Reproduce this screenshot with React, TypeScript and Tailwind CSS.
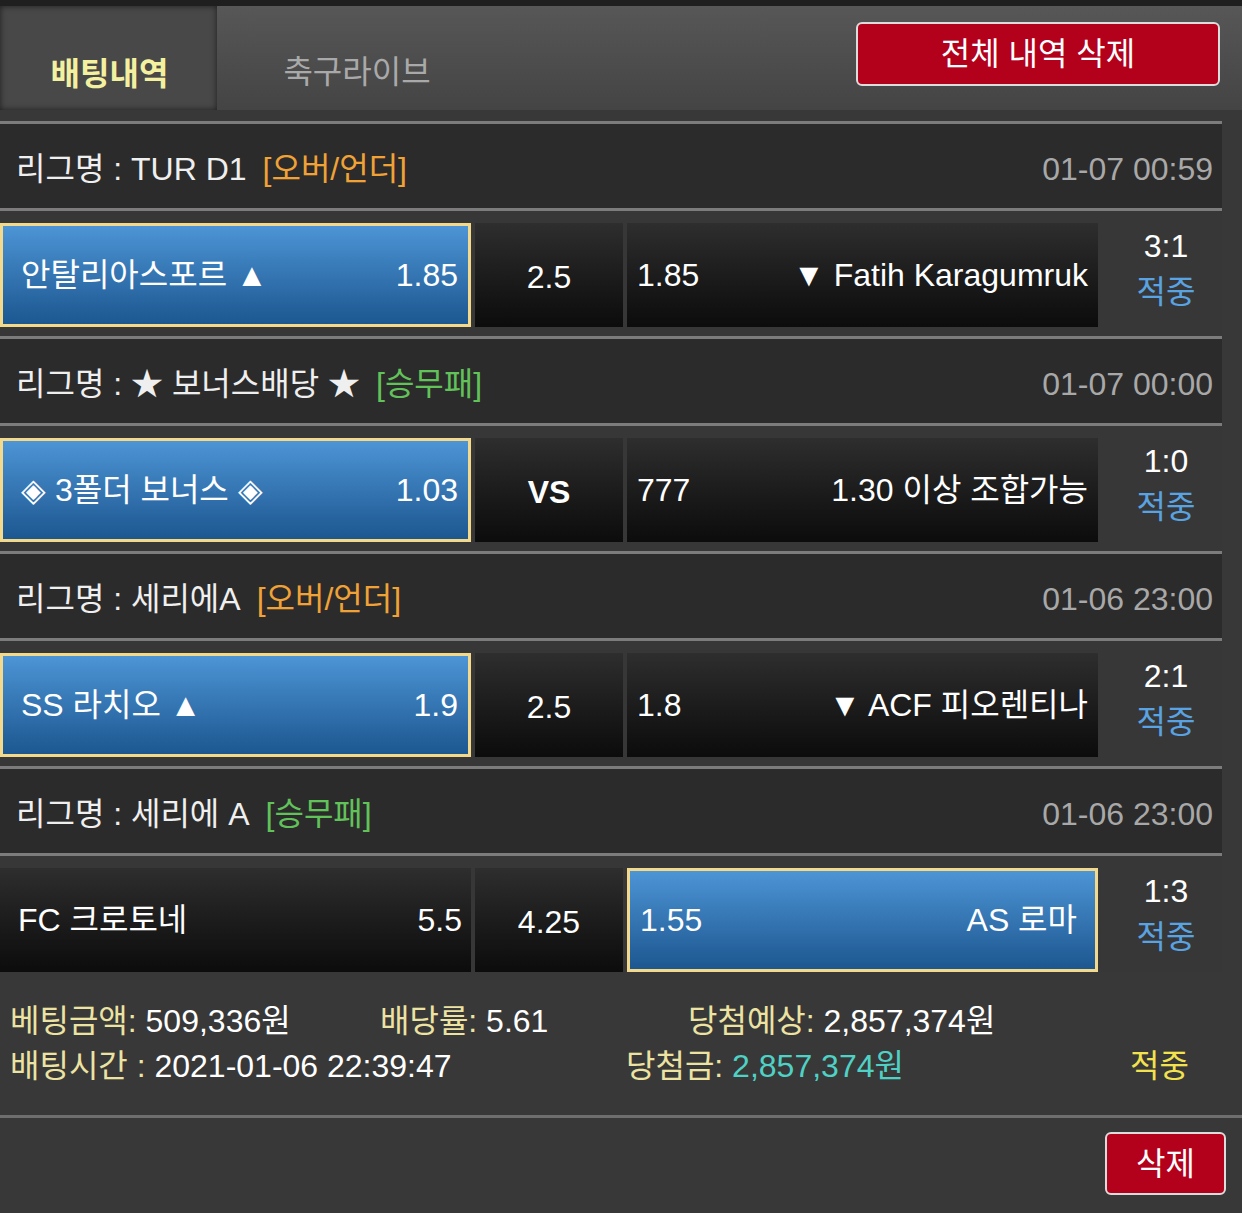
import React from 'react';

type Match = {
    league: string;
    market: string;
    marketKind: 'ou' | 'wdl';
    date: string;
    home: string;
    homeOdds: string;
    mid: string;
    midBold?: boolean;
    awayOdds: string;
    away: string;
    pick: 'home' | 'away';
    score: string;
};

const matches: Match[] = [
    { league: '리그명 : TUR D1', market: '[오버/언더]', marketKind: 'ou', date: '01-07 00:59', home: '안탈리아스포르 ▲', homeOdds: '1.85', mid: '2.5', awayOdds: '1.85', away: '▼ Fatih Karagumruk', pick: 'home', score: '3:1' },
    { league: '리그명 : ★ 보너스배당 ★', market: '[승무패]', marketKind: 'wdl', date: '01-07 00:00', home: '◈ 3폴더 보너스 ◈', homeOdds: '1.03', mid: 'VS', midBold: true, awayOdds: '777', away: '1.30 이상 조합가능', pick: 'home', score: '1:0' },
    { league: '리그명 : 세리에A', market: '[오버/언더]', marketKind: 'ou', date: '01-06 23:00', home: 'SS 라치오 ▲', homeOdds: '1.9', mid: '2.5', awayOdds: '1.8', away: '▼ ACF 피오렌티나', pick: 'home', score: '2:1' },
    { league: '리그명 : 세리에 A', market: '[승무패]', marketKind: 'wdl', date: '01-06 23:00', home: 'FC 크로토네', homeOdds: '5.5', mid: '4.25', awayOdds: '1.55', away: 'AS 로마', pick: 'away', score: '1:3' },
];

const blueCell = 'bg-gradient-to-b from-[#4d95d6] to-[#1c5790] border-[3px] border-[#f2d98c]';
const darkCell = 'bg-gradient-to-b from-[#2e2e2e] to-[#0c0c0c]';

function MatchBlock({ m, last }: { m: Match; last: boolean }) {
    return (
        <div>
            <div className="border-t-[3px] border-[#7c7c7c] h-[87px] bg-[#2b2b2b] flex items-center justify-between pl-[16px] pr-[9px] pt-[5px]">
                <div className="flex items-center gap-[16px] text-[32px] text-[#efefef]">
                    <span>{m.league}</span>
                    <span className={m.marketKind === 'ou' ? 'text-[#f0a236]' : 'text-[#62c25a]'}>{m.market}</span>
                </div>
                <span className="text-[32px] text-[#a8a8a8]">{m.date}</span>
            </div>
            <div className={`border-t-[3px] border-[#7c7c7c] bg-[#373737] flex pt-[12px] ${last ? 'pb-0' : 'pb-[9px]'}`}>
                <div className={`w-[471px] h-[104px] flex items-center justify-between text-[32px] text-white ${m.pick === 'home' ? `${blueCell} pl-[18px] pr-[10px]` : `${darkCell} pl-[18px] pr-[9px]`}`}>
                    <span>{m.home}</span>
                    <span>{m.homeOdds}</span>
                </div>
                <div className={`ml-[4px] w-[148px] h-[104px] flex items-center justify-center pt-[4px] text-[32px] text-white ${darkCell} ${m.midBold ? 'font-bold' : ''}`}>
                    {m.mid}
                </div>
                <div className={`ml-[4px] w-[471px] h-[104px] flex items-center justify-between text-[32px] text-white ${m.pick === 'away' ? `${blueCell} pl-[10px] pr-[18px]` : `${darkCell} pl-[10px] pr-[10px]`}`}>
                    <span>{m.awayOdds}</span>
                    <span>{m.away}</span>
                </div>
                <div className="flex-1 flex flex-col items-center justify-center leading-[46px] -mt-[12px] pl-[12px]">
                    <span className="text-[32px] text-white">{m.score}</span>
                    <span className="text-[32px] text-[#5aa3e2]">적중</span>
                </div>
            </div>
        </div>
    );
}

export default function App() {
    return (
        <div
            className="w-[1242px] min-h-[1213px] bg-[#383838] overflow-hidden"
            style={{ fontFamily: '"Liberation Sans", "Noto Sans CJK KR", sans-serif' }}
        >
            <div className="h-[6px] bg-[#1f1f1f]" />
            <div className="h-[104px] flex bg-gradient-to-b from-[#575757] to-[#444444]">
                <div className="w-[217px] h-full bg-[#484848] shadow-[inset_0_0_6px_rgba(0,0,0,0.6)] flex items-center justify-center pt-[26px] pl-[2px]">
                    <span className="text-[32px] font-bold text-[#f3f1a0]" style={{ fontFamily: '"Noto Sans CJK KR", sans-serif' }}>배팅내역</span>
                </div>
                <div className="w-[280px] h-full flex items-center justify-center pt-[28px]">
                    <span className="text-[32px] text-[#a9a9a9]">축구라이브</span>
                </div>
                <div className="flex-1 flex justify-end items-start pt-[16px] pr-[22px]">
                    <button className="w-[364px] h-[64px] rounded-[6px] border-2 border-[#dcdcdc] bg-[#b3001b] text-white text-[32px]">
                        전체 내역 삭제
                    </button>
                </div>
            </div>

            <div className="pt-[11px] pr-[20px]">
                {matches.map((m, i) => (
                    <MatchBlock key={i} m={m} last={i === matches.length - 1} />
                ))}
            </div>

            <div className="h-[143px] flex flex-col justify-center pl-[10px] text-[32px] leading-[36px] gap-[9px]">
                <div className="flex">
                    <span className="w-[370px]"><span className="text-[#ece3a3]">베팅금액:</span> <span className="text-white">509,336원</span></span>
                    <span className="w-[308px]"><span className="text-[#ece3a3]">배당률:</span> <span className="text-white">5.61</span></span>
                    <span><span className="text-[#ece3a3]">당첨예상:</span> <span className="text-white">2,857,374원</span></span>
                </div>
                <div className="flex">
                    <span className="w-[616px]"><span className="text-[#ece3a3]">배팅시간 :</span> <span className="text-white">2021-01-06 22:39:47</span></span>
                    <span className="w-[504px]"><span className="text-[#ece3a3]">당첨금:</span> <span className="text-[#4fd1c5]">2,857,374원</span></span>
                    <span className="text-[#f2e24e]">적중</span>
                </div>
            </div>
            <div className="border-t-[3px] border-[#6e6e6e] flex justify-end pt-[14px] pr-[16px]">
                <button className="w-[121px] h-[63px] rounded-[6px] border-2 border-[#dcdcdc] bg-[#b3001b] text-white text-[32px]">
                    삭제
                </button>
            </div>
        </div>
    );
}
